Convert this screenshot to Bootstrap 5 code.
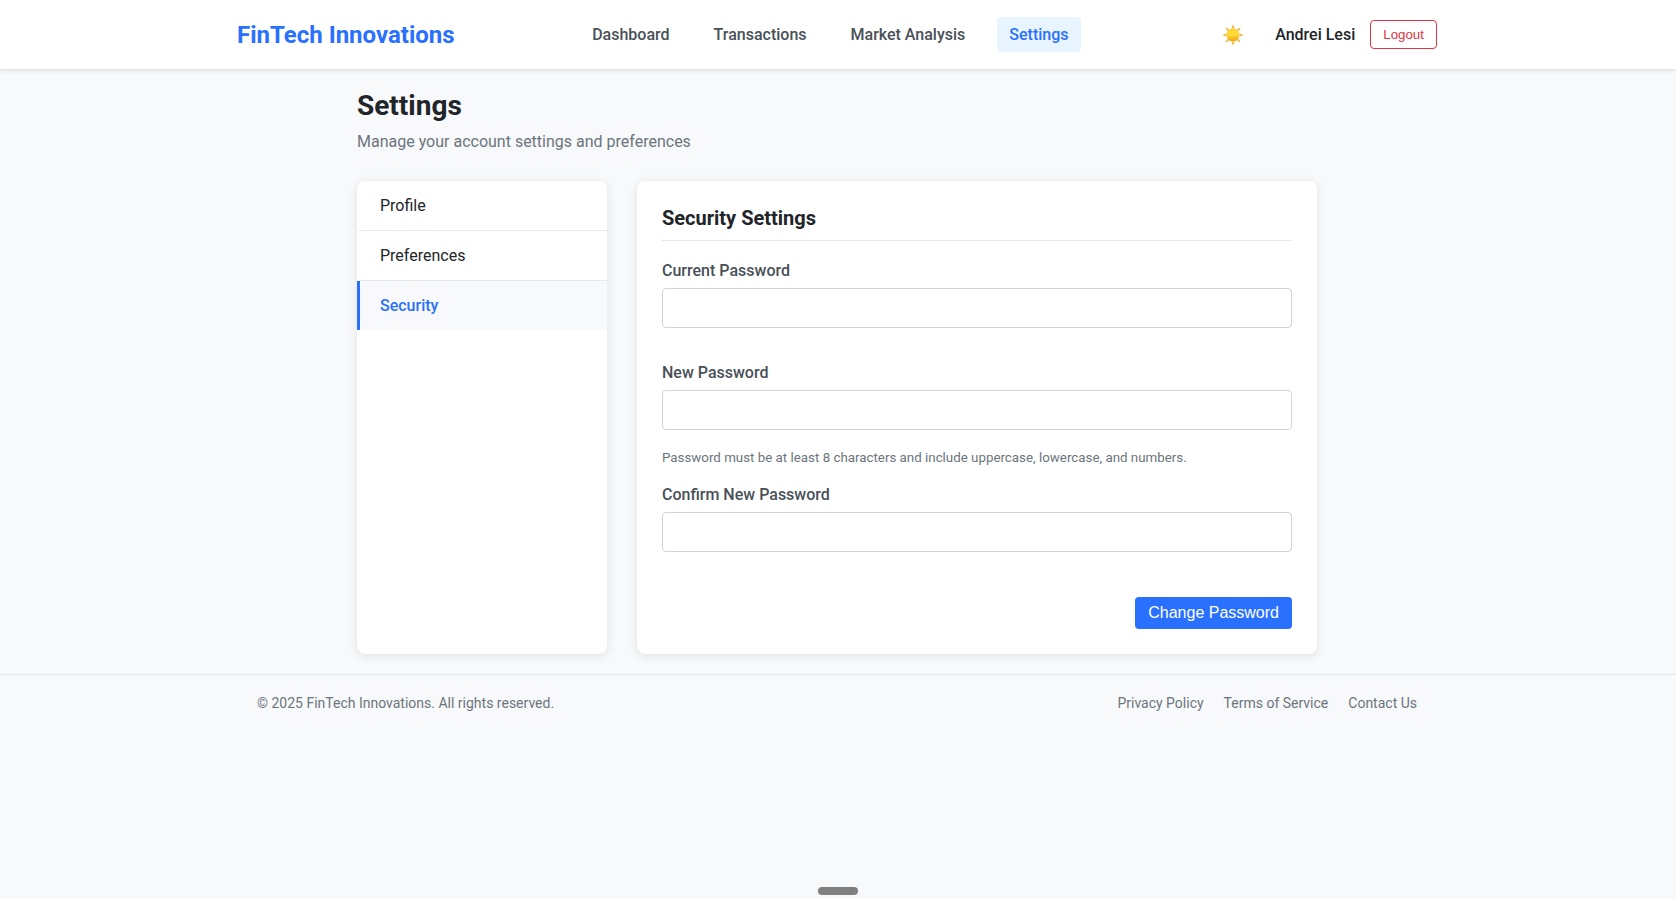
<!DOCTYPE html>
<html lang="en">
<head>
<meta charset="utf-8">
<meta name="viewport" content="width=device-width, initial-scale=1">
<title>Settings - FinTech Innovations</title>
<link href="https://cdn.jsdelivr.net/npm/bootstrap@5.3.0/dist/css/bootstrap.min.css" rel="stylesheet">
<style>
  :root { --brand: #2970ff; --line: #e6e8ea; --muted: #6c757d; --label: #495057; }
  body { font-family: Roboto, "Liberation Sans", sans-serif; font-size: 16px; line-height: 19px; color: #212529; background: #f8f9fb; }
  a { text-decoration: none; }
  .site-header, .site-main, .site-footer { padding-right: 2px; }
  .site-header { background: #fff; box-shadow: 0 2px 4px rgba(0,0,0,.1); }
  .wide { max-width: 1200px; }
  .medium { max-width: 960px; }
  .header-row { min-height: 69px; }
  .brand-link { font-size: 24px; line-height: 28px; font-weight: 700; color: var(--brand); }
  .main-nav { gap: 20px; }
  .main-nav .nav-link { padding: 8px 12px; border-radius: 4px; font-weight: 500; color: var(--label); }
  .main-nav .nav-link.active { color: var(--brand); background: #e8f4ff; }
  .user-area { gap: 15px; }
  .user-name { font-weight: 500; }
  .theme-btn { border: 0; background: none; padding: 8px 16px; }
  .btn-logout { font: smaller/15px "Liberation Sans", Arial, sans-serif; padding: 6px 12px; border-radius: 4px; }
  .page-title { font-size: 28px; line-height: 33px; font-weight: 700; margin: 0 0 10px; }
  .page-head { padding: 20px 0 30px; }
  .page-head p, .hint, .site-footer, .site-footer a { color: var(--muted); }
  .settings-grid { gap: 30px; }
  .panel { background: #fff; border-radius: 8px; box-shadow: 0 2px 10px rgba(0,0,0,.1); }
  .side-panel { flex: 0 0 250px; overflow: hidden; }
  .side-link { padding: 15px 20px; color: #212529; border-left: 3px solid transparent; border-bottom: 1px solid var(--line); }
  .side-link:last-child { border-bottom: 0; }
  .side-link.active { color: var(--brand); font-weight: 500; background: #f8f9fb; border-left-color: var(--brand); }
  .main-panel { padding: 25px; }
  .section-title { font-size: 20px; line-height: 24px; font-weight: 700; padding-bottom: 10px; margin-bottom: 20px; border-bottom: 1px solid var(--line); }
  .field-label { font-weight: 500; color: var(--label); margin-bottom: 8px; }
  .field { height: 40px; border-color: #ced4da; border-radius: 4px; }
  .field-group { margin-bottom: 35px; }
  .hint { font-size: smaller; line-height: 15px; margin: 20px 0; }
  .btn-save { font: 16px/18px "Liberation Sans", Arial, sans-serif; padding: 7px 13px; border: 0; border-radius: 4px; color: #fff; background: var(--brand); }
  .actions { padding-top: 10px; }
  .site-footer { margin-top: 20px; border-top: 1px solid var(--line); font-size: 14px; line-height: 16px; }
  .footer-row { padding: 20px; }
  .footer-links { gap: 20px; }
  .handle { width: 40px; height: 8px; margin-bottom: 4px; background: #7f7f7f; }
</style>
</head>
<body>
<header class="site-header">
  <div class="wide header-row mx-auto d-flex justify-content-between align-items-center">
    <a class="brand-link" href="#">FinTech Innovations</a>
    <nav class="main-nav nav" aria-label="Main">
      <a class="nav-link" href="#">Dashboard</a>
      <a class="nav-link" href="#">Transactions</a>
      <a class="nav-link" href="#">Market Analysis</a>
      <a class="nav-link active" href="#" aria-current="page">Settings</a>
    </nav>
    <div class="user-area d-flex align-items-center">
      <button class="theme-btn d-flex" type="button" aria-label="Switch theme">
        <svg width="22" height="22" viewBox="0 0 22 22" aria-hidden="true">
          <defs>
            <linearGradient id="disc" x1="0" y1="0" x2="0" y2="1"><stop offset="0" stop-color="#ffd31f"/><stop offset=".45" stop-color="#ffdf3a"/><stop offset="1" stop-color="#f2a112"/></linearGradient>
          </defs>
          <g fill="#efb83f">
            <path id="ray" d="M11 .2 12.5 4.2H9.5z"/>
            <use href="#ray" transform="rotate(45 11 11)"/><use href="#ray" transform="rotate(90 11 11)"/>
            <use href="#ray" transform="rotate(135 11 11)"/><use href="#ray" transform="rotate(180 11 11)"/>
            <use href="#ray" transform="rotate(225 11 11)"/><use href="#ray" transform="rotate(270 11 11)"/>
            <use href="#ray" transform="rotate(315 11 11)"/>
          </g>
          <circle cx="11" cy="11" r="6.3" fill="url(#disc)" stroke="#eeb02b" stroke-width=".4"/>
        </svg>
      </button>
      <span class="user-name">Andrei Lesi</span>
      <button class="btn btn-outline-danger btn-logout" type="button">Logout</button>
    </div>
  </div>
</header>

<main class="site-main">
  <div class="medium mx-auto">
    <div class="page-head">
      <h1 class="page-title">Settings</h1>
      <p class="mb-0">Manage your account settings and preferences</p>
    </div>
    <div class="settings-grid d-flex">
      <nav class="panel side-panel d-flex flex-column" aria-label="Settings sections">
        <a class="side-link" href="#">Profile</a>
        <a class="side-link" href="#">Preferences</a>
        <a class="side-link active" href="#" aria-current="true">Security</a>
      </nav>
      <section class="panel main-panel flex-grow-1">
        <h2 class="section-title">Security Settings</h2>
        <form>
          <div class="field-group">
            <label class="field-label d-block" for="current">Current Password</label>
            <input class="form-control field" type="password" id="current">
          </div>
          <div>
            <label class="field-label d-block" for="new">New Password</label>
            <input class="form-control field" type="password" id="new" aria-describedby="rule">
            <p class="hint" id="rule">Password must be at least 8 characters and include uppercase, lowercase, and numbers.</p>
          </div>
          <div class="field-group">
            <label class="field-label d-block" for="confirm">Confirm New Password</label>
            <input class="form-control field" type="password" id="confirm">
          </div>
          <div class="actions d-flex justify-content-end">
            <button class="btn btn-save" type="button">Change Password</button>
          </div>
        </form>
      </section>
    </div>
  </div>
</main>

<footer class="site-footer">
  <div class="wide footer-row mx-auto d-flex justify-content-between">
    <span>© 2025 FinTech Innovations. All rights reserved.</span>
    <div class="footer-links d-flex">
      <a href="#">Privacy Policy</a>
      <a href="#">Terms of Service</a>
      <a href="#">Contact Us</a>
    </div>
  </div>
</footer>
<div class="fixed-bottom mx-auto rounded-pill handle"></div>
<script src="https://cdn.jsdelivr.net/npm/bootstrap@5.3.0/dist/js/bootstrap.bundle.min.js"></script>
</body>
</html>
